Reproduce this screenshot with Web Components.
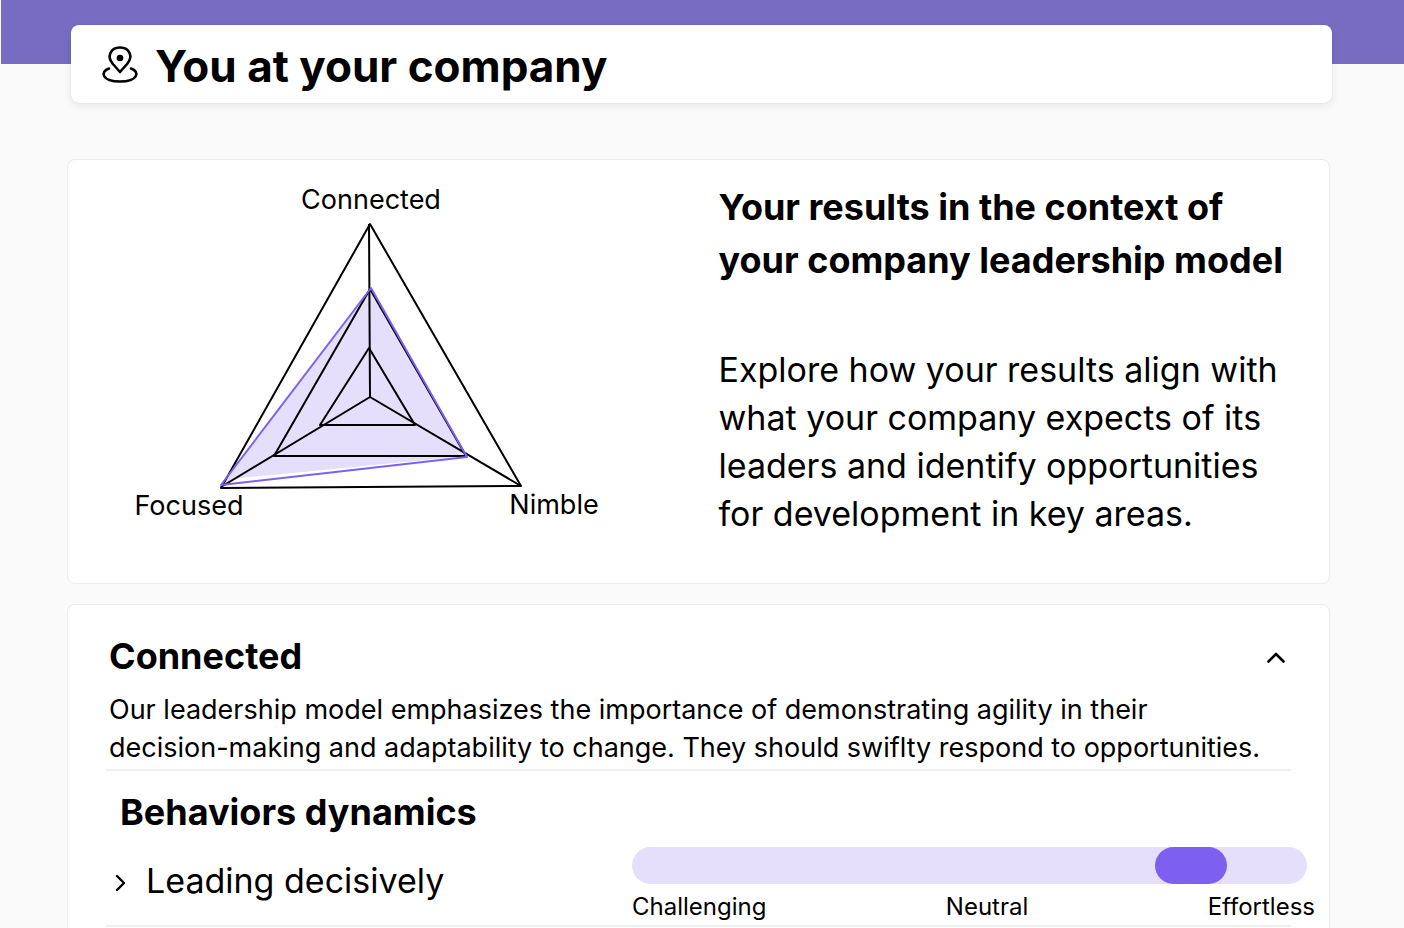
<!DOCTYPE html>
<html lang="en">
<head>
<meta charset="utf-8">
<meta name="viewport" content="width=device-width, initial-scale=1">
<title>You at your company</title>
<style>
  body { margin: 0; background: #fafafa; color: #000; font-family: Inter, "Liberation Sans", sans-serif; }
</style>
</head>
<body>
<company-page>
  <page-banner slot="banner">You at your company</page-banner>
  <results-card>
    <triangle-chart slot="chart"></triangle-chart>
    <span slot="title">Your results in the context of<br>your company leadership model</span>
    Explore how your results align with<br>what your company expects of its<br>leaders and identify opportunities<br>for development in key areas.
  </results-card>
  <competency-card>
    <span slot="title">Connected</span>
    <span slot="description">Our leadership model emphasizes the importance of demonstrating agility in their<br>decision-making and adaptability to change. They should swiflty respond to opportunities.</span>
    <behavior-row value="867">Leading decisively</behavior-row>
  </competency-card>
</company-page>

<script>
class BaseElement extends HTMLElement {
  constructor() {
    super();
    this.attachShadow({ mode: "open" }).innerHTML =
      "<style>:host { display: block; box-sizing: border-box; } *, *::before { box-sizing: border-box; } h1, h2, h3, p { margin: 0; } button { border: 0; padding: 0; background: none; color: inherit; font: inherit; cursor: pointer; }</style>" +
      this.constructor.markup;
  }
}

customElements.define("company-page", class extends BaseElement {
  static markup = `
    <style>
      :host { display: flex; flex-direction: column; min-height: 100vh; }
      main { display: flex; flex: 1; flex-direction: column; gap: 20px; padding: 56px 74px 0 67px; }
    </style>
    <slot name="banner"></slot>
    <main><slot></slot></main>`;
});

customElements.define("page-banner", class extends BaseElement {
  static markup = `
    <style>
      :host { padding: 25px 72px 0 71px; background: linear-gradient(#776cc2, #776cc2) 1px 0 / 100% 64px no-repeat; }
      header { display: flex; align-items: center; gap: 14px; height: 78px; padding: 0 28px; border-radius: 8px; background: #fff; box-shadow: 0 0 1px #00000030, 0 3px 8px #00000014; }
      h1 { padding-top: 4px; font-size: 44px; line-height: 52px; font-weight: 700; }
      svg { flex: none; }
    </style>
    <header>
      <svg width="42" height="42" viewBox="0 0 42 42" fill="none" stroke="#000" stroke-width="2.600" stroke-linecap="round" stroke-linejoin="round" aria-hidden="true">
        <path d="M21 29 L13.500 20.500 C8 14 11 4.500 21 4.500 C31 4.500 34 14 28.500 20.500 Z"/>
        <circle cx="21" cy="15" r="3.300" fill="#000" stroke="none"/>
        <path d="M10 25.500 C1 28.500 2.500 38.500 21 38.500 C39.500 38.500 41 28.500 32 25.500"/>
      </svg>
      <h1><slot></slot></h1>
    </header>`;
});

customElements.define("results-card", class extends BaseElement {
  static markup = `
    <style>
      :host { display: grid; grid-template-columns: 1fr 1fr; min-height: 425px; border: 1px solid #ececec; border-radius: 8px; background: #fff; }
      .chart { padding: 20px 0 0 52px; }
      .text { padding: 21px 0 36px 20px; white-space: nowrap; }
      h2 { margin-bottom: 59px; font-size: 36px; line-height: 53px; font-weight: 700; }
      p { font-size: 34px; line-height: 48px; }
    </style>
    <div class="chart"><slot name="chart"></slot></div>
    <div class="text"><h2><slot name="title"></slot></h2><p><slot></slot></p></div>`;
});

customElements.define("triangle-chart", class extends BaseElement {
  static markup = `
    <style>
      svg { display: block; width: 500px; max-width: 100%; height: auto; }
      text { font-size: 27px; text-anchor: middle; fill: #000; }
    </style>
    <svg viewBox="120 180 500 350" fill="none" stroke-width="2" stroke-linejoin="round" role="img" aria-label="Leadership model results">
      <path fill="#e5dffc" d="M370 289 L466 456 L240 478 L223 484 Z"/>
      <g stroke="#000">
        <path d="M370 224 L521 486 L221 488 Z"/>
        <path d="M370 289 L466 456 L274 456 Z"/>
        <path d="M369 348 L415 425 L320 425 Z"/>
        <path d="M369 224 L370 397 M221 487 L370 397 L521 486"/>
      </g>
      <path stroke="#7e60f0" d="M371 288 L467 457 L221 485 Z"/>
      <g stroke="none">
        <text x="371" y="209">Connected</text>
        <text x="189" y="515">Focused</text>
        <text x="554" y="514">Nimble</text>
      </g>
    </svg>`;
});

customElements.define("competency-card", class extends BaseElement {
  static markup = `
    <style>
      :host { flex: 1; padding: 27px 38px 0; border: 1px solid #ececec; border-bottom: 0; border-radius: 8px 8px 0 0; background: #fff; white-space: nowrap; }
      .head { display: flex; align-items: center; justify-content: space-between; padding: 0 3px; }
      h2 { font-size: 36px; line-height: 48px; font-weight: 700; }
      p { padding: 11px 3px 2px; border-bottom: 2px solid #efefef; font-size: 27px; line-height: 38px; }
      h3 { padding: 17px 14px 19px; font-size: 36px; line-height: 48px; font-weight: 700; }
      button { display: flex; }
    </style>
    <div class="head">
      <h2><slot name="title"></slot></h2>
      <button type="button" aria-label="Collapse section" aria-expanded="true">
        <svg width="24" height="24" viewBox="0 0 24 24" fill="none" stroke="#000" stroke-width="2.600" stroke-linecap="round" stroke-linejoin="round"><path d="M4.500 17.500 L12 10 L19.500 17.500"/></svg>
      </button>
    </div>
    <p><slot name="description"></slot></p>
    <h3>Behaviors dynamics</h3>
    <slot></slot>`;
});

customElements.define("behavior-row", class extends BaseElement {
  static markup = `
    <style>
      :host { border-bottom: 2px solid #efefef; }
      .row { display: grid; grid-template-columns: 526px 1fr; align-items: start; margin-right: -24px; }
      button { display: flex; align-items: center; gap: 12px; margin-top: 2px; padding-left: 2px; font-size: 34px; line-height: 48px; }
      .scale { margin-top: -8px; }
      input { display: block; appearance: none; width: calc(100% - 8px); height: 37px; margin: 0; border-radius: 20px; background: #e5dffc; }
      input::-webkit-slider-thumb { appearance: none; width: 72px; height: 37px; border-radius: 20px; background: #7e60f0; }
      .labels { display: flex; justify-content: space-between; padding: 7px 0 2px; font-size: 24px; line-height: 32px; }
    </style>
    <div class="row">
      <button type="button" aria-expanded="false">
        <svg width="26" height="26" viewBox="0 0 26 26" fill="none" stroke="#000" stroke-width="2.400" stroke-linecap="round" stroke-linejoin="round" aria-hidden="true"><path d="M9 8 L16 15 L9 22"/></svg>
        <span><slot></slot></span>
      </button>
      <div class="scale">
        <input type="range" min="0" max="1000">
        <div class="labels"><span>Challenging</span><span>Neutral</span><span>Effortless</span></div>
      </div>
    </div>`;
  connectedCallback() {
    const input = this.shadowRoot.querySelector("input");
    input.value = this.getAttribute("value");
    input.setAttribute("aria-label", this.textContent.trim());
  }
});
</script>
</body>
</html>
